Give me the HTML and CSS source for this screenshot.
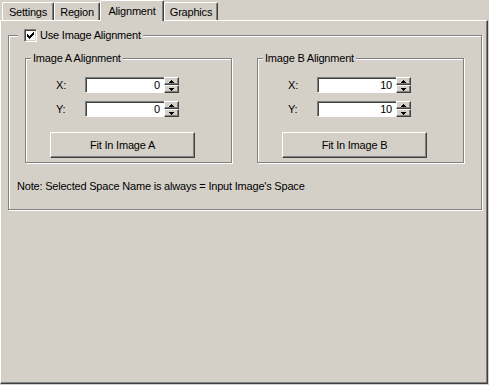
FILE: index.html
```html
<!DOCTYPE html>
<html>
<head>
<meta charset="utf-8">
<link rel="stylesheet" href="styles.css">
</head>
<body>
<div class="window">
  <div class="tabs">
    <div class="tab tab-settings">Settings</div>
    <div class="tab tab-region">Region</div>
    <div class="tab tab-align active">Alignment</div>
    <div class="tab tab-graphics">Graphics</div>
  </div>
  <div class="page">
    <div class="group outer">
      <div class="title outer-title">
        <span class="checkbox">
          <svg width="7" height="7" viewBox="0 0 7 7" shape-rendering="crispEdges"><path d="M6 0h1v3h-1v1h-1v1h-1v1h-1v1h-1v-1h-1v-1h-1v-3h1v1h1v1h1v-1h1v-1h1v-1h1z" fill="#000"/></svg>
        </span>
        <span>Use Image Alignment</span>
      </div>
      <div class="groups">
        <div class="group inner">
          <div class="title inner-title">Image A Alignment</div>
          <div class="fields">
            <div class="field">
              <span class="label">X:</span>
              <div class="edit">0</div>
              <div class="spin">
                <div class="spin-btn"><svg width="5" height="3" viewBox="0 0 5 3" shape-rendering="crispEdges"><path d="M2 0h1v1h1v1h1v1h-5v-1h1v-1h1z" fill="#000"/></svg></div>
                <div class="spin-btn"><svg width="5" height="3" viewBox="0 0 5 3" shape-rendering="crispEdges"><path d="M0 0h5v1h-1v1h-1v1h-1v-1h-1v-1h-1z" fill="#000"/></svg></div>
              </div>
            </div>
            <div class="field">
              <span class="label">Y:</span>
              <div class="edit">0</div>
              <div class="spin">
                <div class="spin-btn"><svg width="5" height="3" viewBox="0 0 5 3" shape-rendering="crispEdges"><path d="M2 0h1v1h1v1h1v1h-5v-1h1v-1h1z" fill="#000"/></svg></div>
                <div class="spin-btn"><svg width="5" height="3" viewBox="0 0 5 3" shape-rendering="crispEdges"><path d="M0 0h5v1h-1v1h-1v1h-1v-1h-1v-1h-1z" fill="#000"/></svg></div>
              </div>
            </div>
          </div>
          <div class="button">Fit In Image A</div>
        </div>
        <div class="group inner">
          <div class="title inner-title">Image B Alignment</div>
          <div class="fields">
            <div class="field">
              <span class="label">X:</span>
              <div class="edit">10</div>
              <div class="spin">
                <div class="spin-btn"><svg width="5" height="3" viewBox="0 0 5 3" shape-rendering="crispEdges"><path d="M2 0h1v1h1v1h1v1h-5v-1h1v-1h1z" fill="#000"/></svg></div>
                <div class="spin-btn"><svg width="5" height="3" viewBox="0 0 5 3" shape-rendering="crispEdges"><path d="M0 0h5v1h-1v1h-1v1h-1v-1h-1v-1h-1z" fill="#000"/></svg></div>
              </div>
            </div>
            <div class="field">
              <span class="label">Y:</span>
              <div class="edit">10</div>
              <div class="spin">
                <div class="spin-btn"><svg width="5" height="3" viewBox="0 0 5 3" shape-rendering="crispEdges"><path d="M2 0h1v1h1v1h1v1h-5v-1h1v-1h1z" fill="#000"/></svg></div>
                <div class="spin-btn"><svg width="5" height="3" viewBox="0 0 5 3" shape-rendering="crispEdges"><path d="M0 0h5v1h-1v1h-1v1h-1v-1h-1v-1h-1z" fill="#000"/></svg></div>
              </div>
            </div>
          </div>
          <div class="button">Fit In Image B</div>
        </div>
      </div>
      <div class="note">Note: Selected Space Name is always = Input Image's Space</div>
    </div>
  </div>
</div>
</body>
</html>
```

FILE: styles.css
```css
html, body {
  margin: 0;
  padding: 0;
}
body {
  width: 489px;
  height: 385px;
  overflow: hidden;
  background: #d4d0c8;
  font-family: "Liberation Sans", Arial, sans-serif;
  font-size: 11px;
  line-height: 13px;
  letter-spacing: -0.2px;
  color: #000;
}
.window {
  width: 488px;
}
.tabs {
  display: flex;
  align-items: flex-end;
  height: 21px;
  padding-left: 2px;
  margin-bottom: -1px;
  position: relative;
  z-index: 1;
}
.tab {
  box-sizing: border-box;
  height: 18px;
  margin-bottom: 1px;
  border-top: 1px solid #fff;
  border-left: 1px solid #fff;
  border-right: 1px solid #404040;
  border-top-left-radius: 2px;
  border-top-right-radius: 2px;
  box-shadow: inset -1px 0 0 #808080;
  background: #d4d0c8;
  display: flex;
  justify-content: center;
  padding-top: 3px;
}
.tab-settings { width: 52px; }
.tab-region { width: 46px; }
.tab-align { width: 64px; }
.tab-graphics { width: 54px; }
.tab.active {
  height: 21px;
  margin-bottom: 0;
  padding-top: 4px;
}
.page {
  box-sizing: border-box;
  height: 364px;
  border-top: 1px solid #fff;
  border-left: 1px solid #fff;
  border-right: 1px solid #404040;
  border-bottom: 1px solid #404040;
  box-shadow: inset -1px -1px 0 #808080;
  padding: 14px 0 0 7px;
}
.group {
  box-sizing: border-box;
  border: 1px solid #808080;
  box-shadow: inset 1px 1px 0 #fff, 1px 1px 0 #fff;
}
.outer {
  width: 474px;
  padding: 0 0 16px 0;
}
.title {
  width: fit-content;
  background: #d4d0c8;
  height: 13px;
  margin-top: -7px;
}
.outer-title {
  display: flex;
  align-items: center;
  margin-left: 9px;
  padding: 0 2px 0 6px;
}
.checkbox {
  box-sizing: border-box;
  width: 13px;
  height: 13px;
  background: #fff;
  border-top: 1px solid #808080;
  border-left: 1px solid #808080;
  border-right: 1px solid #fff;
  border-bottom: 1px solid #fff;
  box-shadow: inset 1px 1px 0 #404040, inset -1px -1px 0 #d4d0c8;
  display: flex;
  padding: 2px 0 0 2px;
  margin-right: 3px;
}
.checkbox svg {
  display: block;
}
.groups {
  display: flex;
  gap: 25px;
  margin: 16px 0 0 16px;
}
.inner {
  width: 207px;
  padding: 0 0 4px 0;
}
.inner-title {
  margin-left: 5px;
  padding: 0 2px;
}
.fields {
  display: flex;
  flex-direction: column;
  gap: 8px;
  margin-top: 12px;
  padding-left: 30px;
}
.field {
  display: flex;
  align-items: center;
  height: 16px;
}
.label {
  width: 29px;
}
.edit {
  box-sizing: border-box;
  width: 79px;
  height: 16px;
  background: #fff;
  border-top: 1px solid #808080;
  border-left: 1px solid #808080;
  border-bottom: 1px solid #fff;
  box-shadow: inset 1px 1px 0 #404040;
  text-align: right;
  padding-right: 4px;
  line-height: 15px;
}
.spin {
  display: flex;
  flex-direction: column;
  width: 15px;
  height: 16px;
}
.spin-btn {
  box-sizing: border-box;
  height: 8px;
  border-top: 1px solid #fff;
  border-left: 1px solid #fff;
  border-right: 1px solid #404040;
  border-bottom: 1px solid #404040;
  box-shadow: inset -1px -1px 0 #808080;
  background: #d4d0c8;
  display: flex;
  align-items: center;
  justify-content: center;
  padding-right: 1px;
}
.spin-btn svg {
  display: block;
}
.button {
  box-sizing: border-box;
  width: 145px;
  height: 26px;
  margin: 15px 0 0 24px;
  border-top: 1px solid #fff;
  border-left: 1px solid #fff;
  border-right: 1px solid #404040;
  border-bottom: 1px solid #404040;
  box-shadow: inset -1px -1px 0 #808080;
  display: flex;
  align-items: center;
  justify-content: center;
}
.note {
  margin: 17px 0 0 8px;
}
```
